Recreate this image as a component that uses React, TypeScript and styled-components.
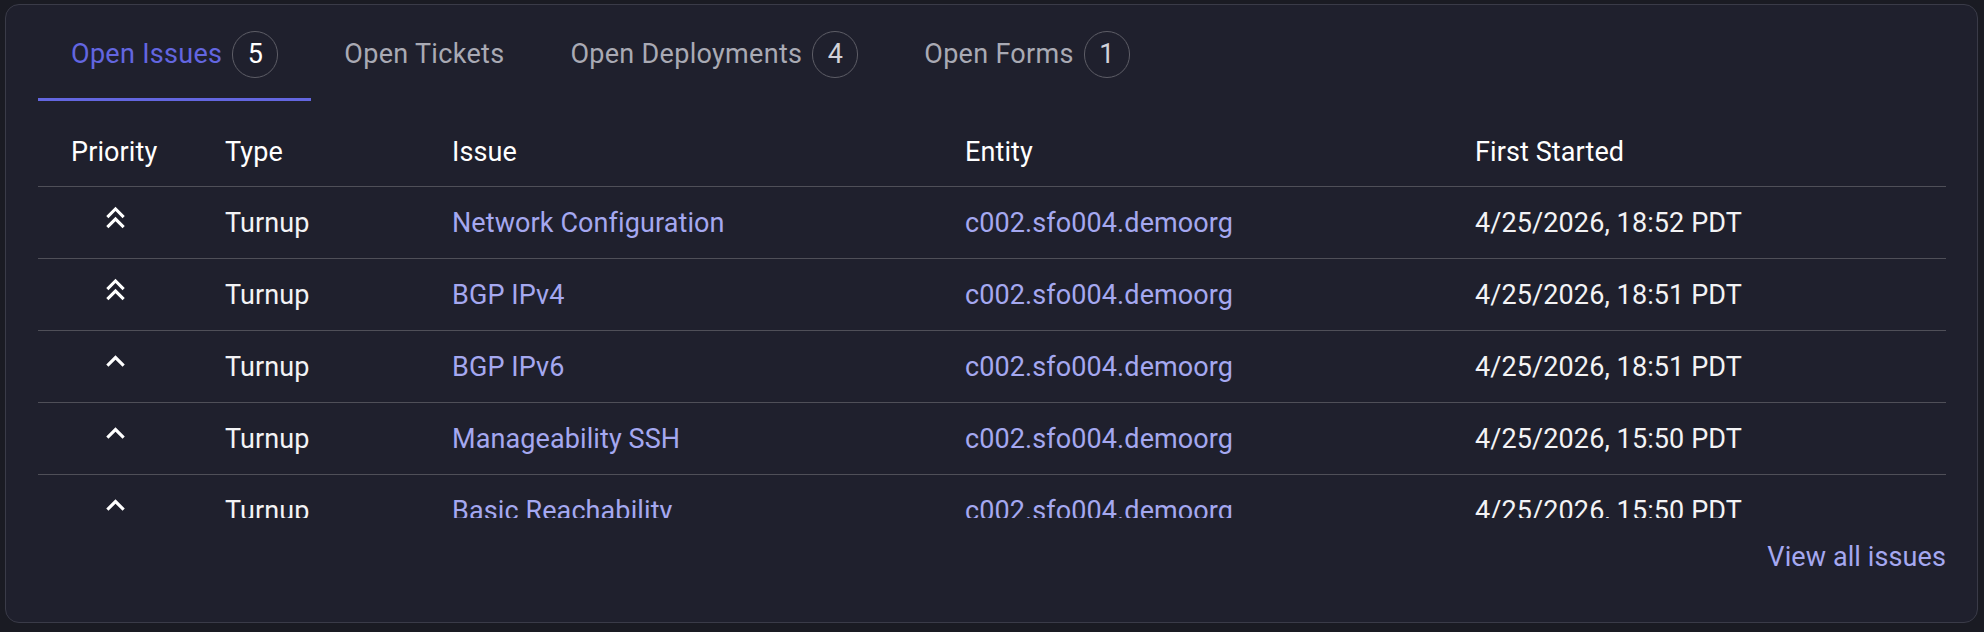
import styled, { createGlobalStyle } from "styled-components";

const GlobalStyle = createGlobalStyle`
  html, body {
    margin: 0;
    background: #1a1b23;
  }
  body {
    font-family: Roboto, "Liberation Sans", sans-serif;
    -webkit-font-smoothing: antialiased;
  }
`;

type Priority = "high" | "normal";

interface Issue {
  priority: Priority;
  type: string;
  issue: string;
  entity: string;
  started: string;
}

const issues: Issue[] = [
  { priority: "high", type: "Turnup", issue: "Network Configuration", entity: "c002.sfo004.demoorg", started: "4/25/2026, 18:52 PDT" },
  { priority: "high", type: "Turnup", issue: "BGP IPv4", entity: "c002.sfo004.demoorg", started: "4/25/2026, 18:51 PDT" },
  { priority: "normal", type: "Turnup", issue: "BGP IPv6", entity: "c002.sfo004.demoorg", started: "4/25/2026, 18:51 PDT" },
  { priority: "normal", type: "Turnup", issue: "Manageability SSH", entity: "c002.sfo004.demoorg", started: "4/25/2026, 15:50 PDT" },
  { priority: "normal", type: "Turnup", issue: "Basic Reachability", entity: "c002.sfo004.demoorg", started: "4/25/2026, 15:50 PDT" },
];

const tabs = [
  { label: "Open Issues", count: 5 },
  { label: "Open Tickets" },
  { label: "Open Deployments", count: 4 },
  { label: "Open Forms", count: 1 },
];

const columns = [
  { label: "Priority", width: 154 },
  { label: "Type", width: 227 },
  { label: "Issue", width: 513 },
  { label: "Entity", width: 510 },
  { label: "First Started", width: 504 },
];

const Page = styled.div`
  padding: 4px 6px 8px 5px;
`;

const Card = styled.section`
  background: #1f202d;
  border: 1px solid #3a3b48;
  border-radius: 14px;
  padding: 0 31px 46px 32px;
`;

const TabBar = styled.div`
  display: flex;
`;

const Tab = styled.div<{ $active?: boolean }>`
  height: 96px;
  box-sizing: border-box;
  padding: 5px 33px 0;
  display: flex;
  align-items: center;
  gap: 10px;
  font-size: 27px;
  letter-spacing: 0.3px;
  color: ${(p) => (p.$active ? "#6366e0" : "#a9aab4")};
  border-bottom: 3px solid ${(p) => (p.$active ? "#6366e0" : "transparent")};
`;

const Badge = styled.span<{ $active?: boolean }>`
  box-sizing: border-box;
  height: 47px;
  min-width: 46px;
  padding: 0 13px;
  border: 1.5px solid #5d5d66;
  border-radius: 24px;
  display: inline-flex;
  align-items: center;
  justify-content: center;
  letter-spacing: 0;
  color: ${(p) => (p.$active ? "#ffffff" : "#d2d2d9")};
`;

const TableWrap = styled.div`
  margin-top: 17px;
  height: 400px;
  overflow: hidden;
`;

const Table = styled.table`
  width: 100%;
  table-layout: fixed;
  border-collapse: separate;
  border-spacing: 0;
  font-size: 27px;
  letter-spacing: 0.1px;
`;

const HeadCell = styled.th`
  height: 69px;
  padding: 0 0 0 33px;
  text-align: left;
  font-weight: 400;
  color: #ffffff;
  border-bottom: 1px solid #4f4f58;
  box-sizing: border-box;
`;

const Cell = styled.td<{ $center?: boolean }>`
  height: 72px;
  padding: 0 0 0 ${(p) => (p.$center ? 0 : 33)}px;
  text-align: ${(p) => (p.$center ? "center" : "left")};
  color: #f3f3f5;
  border-bottom: 1px solid #4f4f58;
  box-sizing: border-box;
  white-space: nowrap;
`;

const Link = styled.span`
  color: #a5a8f0;
`;

const PriorityIcon = styled.svg`
  display: block;
  margin: 0 auto 11px;
  width: 37px;
  height: 37px;
  fill: #ffffff;
`;

const Footer = styled.div`
  display: flex;
  justify-content: flex-end;
  padding-top: 21px;
  font-size: 27px;
  line-height: 37px;
  letter-spacing: 0.1px;
`;

const ChevronUp = () => (
  <PriorityIcon viewBox="0 0 24 24">
    <path d="M7.41 15.41 12 10.83l4.59 4.58L18 14l-6-6-6 6z" />
  </PriorityIcon>
);

const DoubleChevronUp = () => (
  <PriorityIcon viewBox="0 0 24 24">
    <path d="M6 17.59 7.41 19 12 14.42 16.59 19 18 17.59l-6-6z" />
    <path d="M6 11 7.41 12.41 12 7.83l4.59 4.58L18 11l-6-6z" />
  </PriorityIcon>
);

export default function App() {
  return (
    <Page>
      <GlobalStyle />
      <Card>
        <TabBar>
          {tabs.map((t, i) => (
            <Tab key={t.label} $active={i === 0}>
              {t.label}
              {t.count !== undefined && <Badge $active={i === 0}>{t.count}</Badge>}
            </Tab>
          ))}
        </TabBar>
        <TableWrap>
          <Table>
            <colgroup>
              {columns.map((c) => (
                <col key={c.label} style={{ width: c.width }} />
              ))}
            </colgroup>
            <thead>
              <tr>
                {columns.map((c) => (
                  <HeadCell key={c.label}>{c.label}</HeadCell>
                ))}
              </tr>
            </thead>
            <tbody>
              {issues.map((row, i) => (
                <tr key={i}>
                  <Cell $center>{row.priority === "high" ? <DoubleChevronUp /> : <ChevronUp />}</Cell>
                  <Cell>{row.type}</Cell>
                  <Cell>
                    <Link>{row.issue}</Link>
                  </Cell>
                  <Cell>
                    <Link>{row.entity}</Link>
                  </Cell>
                  <Cell>{row.started}</Cell>
                </tr>
              ))}
            </tbody>
          </Table>
        </TableWrap>
        <Footer>
          <Link>View all issues</Link>
        </Footer>
      </Card>
    </Page>
  );
}
